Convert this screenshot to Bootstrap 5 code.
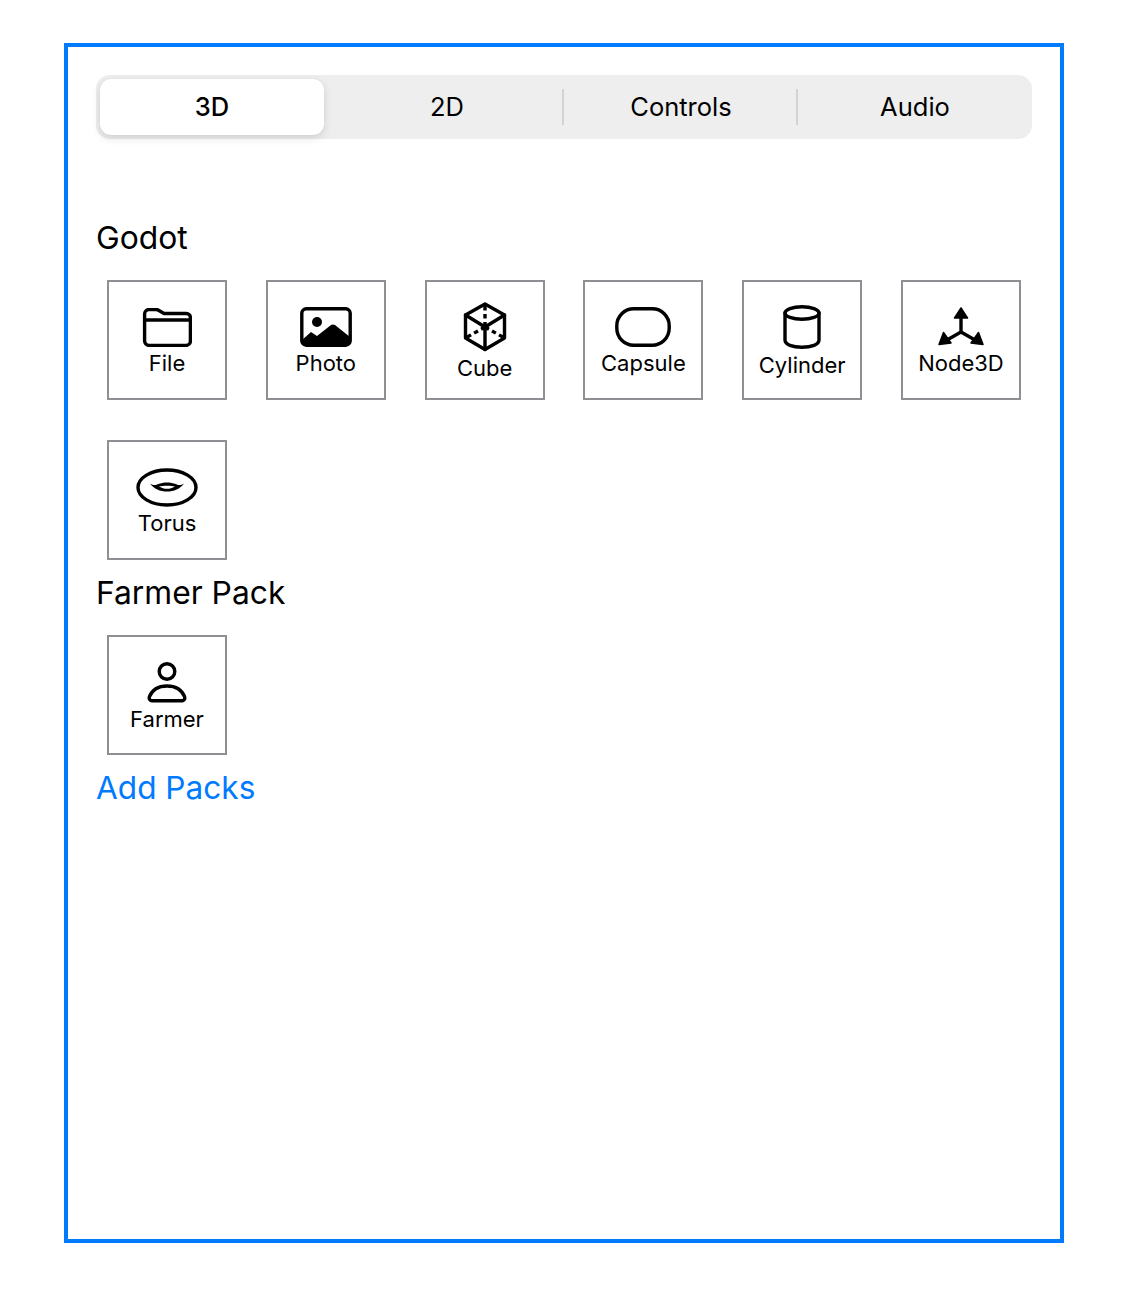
<!DOCTYPE html>
<html lang="en">

<head>
    <meta charset="UTF-8" />
    <meta name="viewport" content="width=device-width, initial-scale=1" />
    <title>Asset Library</title>
    <link href="https://cdn.jsdelivr.net/npm/bootstrap@5.3.0/dist/css/bootstrap.min.css" rel="stylesheet" />
    <style>
        body {
            background: #fff;
            font-family: Inter, "Liberation Sans", sans-serif;
            color: #000;
        }

        .lib-frame {
            width: 1000px;
            height: 1200px;
            margin: 43px 0 0 64px;
            border: 4px solid #007aff;
            padding: 28px;
        }

        .seg-bar {
            height: 64px;
            background: #eeeeee;
            border-radius: 14px;
        }

        .seg-item {
            flex: 1 1 0;
            position: relative;
            font-size: 25.5px;
            color: #000;
            text-decoration: none;
        }

        .seg-item + .seg-item + .seg-item::before {
            content: "";
            position: absolute;
            left: -2px;
            top: 14px;
            height: 36px;
            width: 2px;
            background: #d3d3d5;
        }

        .seg-item.seg-active {
            font-weight: 500;
            margin: 4px 6px 4px 4px;
            flex: 0 0 224px;
            background: #fff;
            border-radius: 11px;
            box-shadow: 0 3px 8px rgba(0, 0, 0, .13), 0 0 1px rgba(0, 0, 0, .1);
        }

        .pack-title {
            font-size: 31.8px;
            line-height: 38px;
            margin: 0 0 23px 0;
            font-weight: 400;
        }

        .pack-title.first-title {
            margin-top: 80px;
        }

        .tile-grid {
            display: grid;
            grid-template-columns: repeat(6, 120px);
            justify-content: space-between;
            row-gap: 40px;
            padding: 0 11px;
            margin-bottom: 14px;
        }

        .asset-tile {
            width: 120px;
            height: 120px;
            border: 2px solid #8e8e93;
            font-size: 22px;
            line-height: 26px;
        }

        .asset-tile span {
            margin: 3px 0 -3px;
        }

        .asset-tile svg {
            display: block;
            fill: none;
            stroke: #000;
            stroke-width: 3.4;
            stroke-linecap: round;
            stroke-linejoin: round;
        }

        .add-link {
            display: block;
            font-size: 31.6px;
            line-height: 38px;
            margin-top: 2px;
            color: #007aff;
            text-decoration: none;
        }
    </style>
</head>

<body>
    <div class="lib-frame">
        <nav class="seg-bar d-flex">
            <a class="seg-item seg-active d-flex align-items-center justify-content-center" href="#">3D</a>
            <a class="seg-item d-flex align-items-center justify-content-center" href="#">2D</a>
            <a class="seg-item d-flex align-items-center justify-content-center" href="#">Controls</a>
            <a class="seg-item d-flex align-items-center justify-content-center" href="#">Audio</a>
        </nav>

        <h2 class="pack-title first-title">Godot</h2>
        <div class="tile-grid">
            <div class="asset-tile d-flex flex-column align-items-center justify-content-center">
                <svg width="50" height="39" viewBox="0 0 50 39">
                    <path d="M2.600 7V33a4.400 4.400 0 0 0 4.400 4.400H44a4.400 4.400 0 0 0 4.400-4.400V9.500A4 4 0 0 0 44.400 5.500H22L16.500 2.200A5 5 0 0 0 14 1.600H7A4.400 4.400 0 0 0 2.600 6Z" />
                    <path d="M2.600 12H48.400" />
                </svg>
                <span>File</span>
            </div>
            <div class="asset-tile d-flex flex-column align-items-center justify-content-center">
                <svg width="52" height="40" viewBox="0 0 52 40">
                    <rect x="1.800" y="1.800" width="48.400" height="36.400" rx="4.500" />
                    <circle cx="17" cy="15" r="5" fill="#000" stroke="none" />
                    <path d="M2 33L11 25L17 29L31 18Q33 17 35 18L50 30V35A4 4 0 0 1 46 39H6A4 4 0 0 1 2 35Z" fill="#000" stroke="none" />
                </svg>
                <span>Photo</span>
            </div>
            <div class="asset-tile d-flex flex-column align-items-center justify-content-center">
                <svg width="44" height="50" viewBox="0 0 44 50">
                    <path d="M22 2L41.500 13V36L22 47.500L2.500 36V13Z" />
                    <path d="M2.500 13L22 25L41.500 13M22 25V47.500" />
                    <path d="M22 4V25M22 25L2.500 36M22 25L41.500 36" stroke-dasharray="4.500 3.500" stroke-linecap="butt" stroke-width="3.400" />
                    <circle cx="22" cy="25" r="3.500" fill="#000" stroke="none" />
                </svg>
                <span>Cube</span>
            </div>
            <div class="asset-tile d-flex flex-column align-items-center justify-content-center">
                <svg width="56" height="40" viewBox="0 0 56 40">
                    <rect x="1.800" y="1.800" width="52.400" height="36.400" rx="17" />
                </svg>
                <span>Capsule</span>
            </div>
            <div class="asset-tile d-flex flex-column align-items-center justify-content-center">
                <svg width="38" height="44" viewBox="0 0 38 44">
                    <ellipse cx="19" cy="8" rx="17" ry="6.300" />
                    <path d="M2 8V35C2 39.500 9.500 42.300 19 42.300S36 39.500 36 35V8" />
                </svg>
                <span>Cylinder</span>
            </div>
            <div class="asset-tile d-flex flex-column align-items-center justify-content-center">
                <svg width="46" height="40" viewBox="0 0 46 40">
                    <path d="M23 10V25M23 25L9 33M23 25L37 33" />
                    <path d="M23 1L29.500 11H16.500ZM1 37.500L5.500 25.500L13 36ZM45 37.500L40.500 25.500L33 36Z" fill="#000" stroke="#000" stroke-width="1.500" />
                </svg>
                <span>Node3D</span>
            </div>
            <div class="asset-tile d-flex flex-column align-items-center justify-content-center">
                <svg width="62" height="39" viewBox="0 0 62 39">
                    <ellipse cx="31" cy="19.500" rx="29" ry="17.500" />
                    <path d="M14 15.500C18 18 20 17 24 15.500C28 14 34 14 38 15.500C42 17 44 18 48 15.500C44 21 38 23.500 31 23.500S18 21 14 15.500Z" fill="#000" stroke="none" />
                    <path d="M23 18.500C27 17.500 35 17.500 39 18.500C36 20.300 34 20.800 31 20.800S26 20.300 23 18.500Z" fill="#fff" stroke="none" />
                </svg>
                <span>Torus</span>
            </div>
        </div>

        <h2 class="pack-title">Farmer Pack</h2>
        <div class="tile-grid">
            <div class="asset-tile d-flex flex-column align-items-center justify-content-center">
                <svg width="40" height="41" viewBox="0 0 40 41">
                    <circle cx="20" cy="9.500" r="7.800" />
                    <path d="M5 38.800H35A3 3 0 0 0 37.700 35C35 28 28.500 24 20 24S5 28 2.300 35A3 3 0 0 0 5 38.800Z" />
                </svg>
                <span>Farmer</span>
            </div>
        </div>

        <a class="add-link" href="#">Add Packs</a>
    </div>

    <script src="https://cdn.jsdelivr.net/npm/bootstrap@5.3.0/dist/js/bootstrap.bundle.min.js"></script>
</body>

</html>
